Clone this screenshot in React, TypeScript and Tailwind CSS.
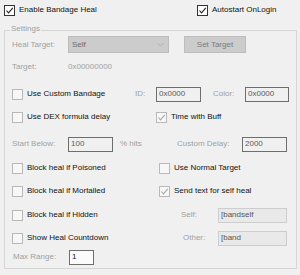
const font = { fontFamily: '"Liberation Sans", Arial, sans-serif' };

function Check({
  label,
  checked = false,
  dark = false,
}: {
  label: string;
  checked?: boolean;
  dark?: boolean;
}) {
  return (
    <div className="flex items-center gap-[4px]">
      <span
        className={
          dark
            ? "w-[11px] h-[11px] shrink-0 border border-[#333333] bg-white flex items-center justify-center"
            : "w-[11px] h-[11px] shrink-0 border border-[#b8b8b8] bg-[#f7f7f7] flex items-center justify-center"
        }
      >
        {checked && (
          <svg width="9" height="9" viewBox="0 0 9 9">
            <path
              d="M1.5 4.5 L3.5 6.8 L7.8 1.8"
              fill="none"
              stroke={dark ? "#222222" : "#a8a8a8"}
              strokeWidth="1.1"
            />
          </svg>
        )}
      </span>
      <span className="text-[#111111] whitespace-nowrap">{label}</span>
    </div>
  );
}

function Field({
  value,
  w,
  light = false,
  enabled = false,
}: {
  value: string;
  w: string;
  light?: boolean;
  enabled?: boolean;
}) {
  let cls = "h-[15px] shrink-0 flex items-center pl-[2px] border ";
  if (light) cls += "border-[#cdcdcd] bg-[#e9e9e9] text-[#555555]";
  else if (enabled) cls += "border-[#6e6e6e] bg-[#fbfbfb] text-[#111111]";
  else cls += "border-[#6e6e6e] bg-[#f0f0f0] text-[#5a5a5a]";
  return <div className={cls + " " + w}>{value}</div>;
}

export default function App() {
  return (
    <div
      className="w-[300px] h-[275px] bg-[#f0f0f0] overflow-hidden text-[8px] leading-[10px]"
      style={font}
    >
      <div className="flex items-center h-[14px] mt-[3px] pl-[4px]">
        <div className="w-[193px]">
          <Check label="Enable Bandage Heal" checked dark />
        </div>
        <Check label="Autostart OnLogin" checked dark />
      </div>

      <div className="relative ml-[4px] mt-[13px] w-[293px] h-[239px] border border-[#d5d5d5] pt-[5px] pl-[7px]">
        <span className="absolute left-[5px] -top-[7px] px-[1px] bg-[#f0f0f0] text-[#a0a0a0]">
          Settings
        </span>

        <div className="flex items-center h-[17px]">
          <span className="w-[56px] text-[#a0a0a0]">Heal Target:</span>
          <div className="w-[101px] h-[17px] bg-[#cccccc] border border-[#bcbcbc] flex items-center justify-between pl-[3px] pr-[4px] text-[#6a6a6a]">
            <span>Self</span>
            <svg width="7" height="5" viewBox="0 0 7 5">
              <path d="M0.5 1 L3.5 4 L6.5 1" fill="none" stroke="#b0b0b0" strokeWidth="1" />
            </svg>
          </div>
          <div className="ml-[15px] w-[62px] h-[17px] bg-[#cccccc] border border-[#bdbdbd] flex items-center justify-center text-[#7a7a7a]">
            Set Target
          </div>
        </div>

        <div className="flex items-center h-[16px] mt-[6px]">
          <span className="w-[56px] text-[#a0a0a0]">Target:</span>
          <span className="text-[#a0a0a0]">0x00000000</span>
        </div>

        <div className="flex items-center h-[16px] mt-[11px]">
          <div className="w-[123px]">
            <Check label="Use Custom Bandage" />
          </div>
          <span className="w-[21px] text-[#a0a0a0]">ID:</span>
          <Field value="0x0000" w="w-[45px]" />
          <span className="ml-[12px] w-[32px] text-[#a0a0a0]">Color:</span>
          <Field value="0x0000" w="w-[44px]" />
        </div>

        <div className="flex items-center h-[16px] mt-[7px]">
          <div className="w-[144px]">
            <Check label="Use DEX formula delay" />
          </div>
          <Check label="Time with Buff" checked />
        </div>

        <div className="flex items-center h-[16px] mt-[11px]">
          <span className="w-[56px] text-[#a0a0a0]">Start Below:</span>
          <Field value="100" w="w-[45px]" />
          <span className="ml-[7px] w-[57px] text-[#a0a0a0]">% hits</span>
          <span className="w-[65px] text-[#a0a0a0]">Custom Delay:</span>
          <Field value="2000" w="w-[45px]" />
        </div>

        <div className="flex items-center h-[16px] mt-[8px]">
          <div className="w-[147px]">
            <Check label="Block heal if Poisoned" />
          </div>
          <Check label="Use Normal Target" />
        </div>

        <div className="flex items-center h-[16px] mt-[7px]">
          <div className="w-[147px]">
            <Check label="Block heal if Mortalled" />
          </div>
          <Check label="Send text for self heal" checked />
        </div>

        <div className="flex items-center h-[16px] mt-[8px]">
          <div className="w-[169px]">
            <Check label="Block heal if Hidden" />
          </div>
          <span className="w-[37px] text-[#a0a0a0]">Self:</span>
          <Field value="[bandself" w="w-[69px]" light />
        </div>

        <div className="flex items-center h-[16px] mt-[7px]">
          <div className="w-[171px]">
            <Check label="Show Heal Countdown" />
          </div>
          <span className="w-[35px] text-[#a0a0a0]">Other:</span>
          <Field value="[band" w="w-[69px]" light />
        </div>

        <div className="flex items-center h-[16px] mt-[3px]">
          <span className="w-[57px] pl-[1px] text-[#a0a0a0]">Max Range:</span>
          <Field value="1" w="w-[25px]" enabled />
        </div>
      </div>
    </div>
  );
}
